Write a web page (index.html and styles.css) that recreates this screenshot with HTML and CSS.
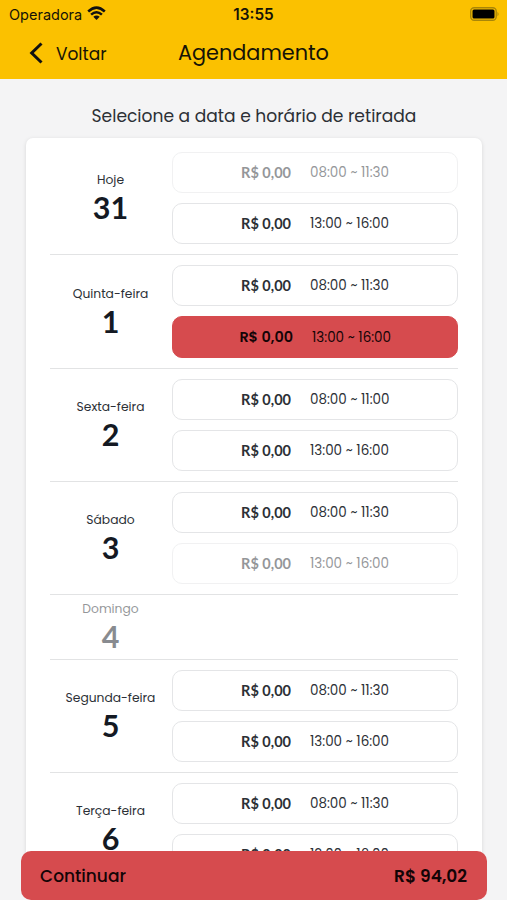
FILE: index.html
```html
<!DOCTYPE html>
<html lang="pt-BR">
<head>
<meta charset="utf-8">
<meta name="viewport" content="width=device-width, initial-scale=1">
<title>Agendamento</title>
<link rel="stylesheet" href="styles.css">
</head>
<body>
<div class="screen">
  <header class="header">
    <div class="status">
      <div class="carrier"><span class="operator">Operadora</span>
        <svg class="wifi" width="19" height="15" viewBox="0 0 19 15"><g fill="none" stroke="#111" stroke-width="2.5"><path d="M1.2 5.5Q9.5-2.3 17.800 5.500"/><path d="M4.100 8.700Q9.500 3.700 14.900 8.700"/></g><path d="M6.300 10.700Q9.500 8.200 12.700 10.700L9.500 14Z" fill="#111"/></svg>
      </div>
      <span class="clock">13:55</span>
      <svg class="battery" width="31" height="14" viewBox="0 0 31 14"><rect x="1.700" y=".7" width="25.500" height="12.600" rx="3.500" fill="none" stroke="#a98608" stroke-width="1.400"/><rect x="3.500" y="2.500" width="22" height="9" rx="1.500"/><path d="M28.500 4.700Q30.700 7 28.500 9.300Z" fill="#a98608"/></svg>
    </div>
    <nav class="nav">
      <div class="back"><svg width="14" height="22" viewBox="0 0 14 22"><path d="M12.500 1.500L2.700 11L12.500 20.500" fill="none" stroke="#111" stroke-width="3"/></svg><span class="back-label">Voltar</span></div>
      <h1 class="title">Agendamento</h1>
    </nav>
  </header>
  <main class="content">
    <p class="subtitle">Selecione a data e horário de retirada</p>
    <div class="card">
      <section class="day"><div class="date"><span class="name">Hoje</span><span class="number">31</span></div>
        <div class="slots"><div class="slot disabled"><b>R$ 0,00</b><span>08:00 ~ 11:30</span></div><div class="slot"><b>R$ 0,00</b><span>13:00 ~ 16:00</span></div></div></section>
      <section class="day"><div class="date"><span class="name">Quinta-feira</span><span class="number">1</span></div>
        <div class="slots"><div class="slot"><b>R$ 0,00</b><span>08:00 ~ 11:30</span></div><div class="slot selected"><b>R$ 0,00</b><span>13:00 ~ 16:00</span></div></div></section>
      <section class="day"><div class="date"><span class="name">Sexta-feira</span><span class="number">2</span></div>
        <div class="slots"><div class="slot"><b>R$ 0,00</b><span>08:00 ~ 11:00</span></div><div class="slot"><b>R$ 0,00</b><span>13:00 ~ 16:00</span></div></div></section>
      <section class="day"><div class="date"><span class="name">Sábado</span><span class="number">3</span></div>
        <div class="slots"><div class="slot"><b>R$ 0,00</b><span>08:00 ~ 11:30</span></div><div class="slot disabled"><b>R$ 0,00</b><span>13:00 ~ 16:00</span></div></div></section>
      <section class="day closed"><div class="date"><span class="name">Domingo</span><span class="number">4</span></div></section>
      <section class="day"><div class="date"><span class="name">Segunda-feira</span><span class="number">5</span></div>
        <div class="slots"><div class="slot"><b>R$ 0,00</b><span>08:00 ~ 11:30</span></div><div class="slot"><b>R$ 0,00</b><span>13:00 ~ 16:00</span></div></div></section>
      <section class="day"><div class="date"><span class="name">Terça-feira</span><span class="number">6</span></div>
        <div class="slots"><div class="slot"><b>R$ 0,00</b><span>08:00 ~ 11:30</span></div><div class="slot"><b>R$ 0,00</b><span>13:00 ~ 16:00</span></div></div></section>
    </div>
  </main>
  <footer class="continue"><span class="action">Continuar</span><span class="total">R$ 94,02</span></footer>
</div>
</body>
</html>
```
FILE: styles.css
```css
* { box-sizing: border-box; }
body { margin: 0; background: #f4f4f5; color: #2c3036; font-family: Poppins, Inter, "Liberation Sans", sans-serif; }
.screen { height: 900px; overflow: hidden; display: flex; flex-direction: column; position: relative; }
.header { height: 79px; flex: none; background: #fbc100; color: #151307; }
.status { height: 28px; display: grid; grid-template-columns: 1fr auto 1fr; align-items: center; padding: 0 7px 0 9px; font-family: Inter, sans-serif; }
.carrier { display: flex; align-items: center; gap: 5px; font-size: 14.5px; }
.wifi { display: block; margin-top: -2px; }
.clock { font-size: 15.3px; font-weight: 600; margin-left: -2px; }
.battery { justify-self: end; margin-top: -1px; }
.nav { display: grid; grid-template-columns: 149px 1fr; height: 49px; align-items: center; padding-left: 29px; }
.back { display: flex; align-items: center; gap: 13px; font-size: 17px; }
.back-label { padding-top: 2px; }
.title { margin: 0; font-size: 20.8px; font-weight: 400; }
.content { flex: none; padding: 23px 25px 0 26px; }
.subtitle { margin: 0; height: 36px; line-height: 28px; font-size: 17.1px; text-align: center; white-space: nowrap; }
.card { background: #fff; border-radius: 7px; box-shadow: 0 1px 4px rgba(0,0,0,.12); padding: 4px 24px 0; }
.day { display: grid; grid-template-columns: 121px 1fr; column-gap: 1px; padding: 10px 0; border-bottom: 1px solid #e2e3e4; }
.date { display: flex; flex-direction: column; align-items: center; justify-content: center; }
.name { font-size: 12.3px; line-height: 20px; white-space: nowrap; }
.number { font: 700 30.5px/34px Lato, sans-serif; color: #141923; padding-bottom: 2px; }
.slots { display: grid; gap: 10px; }
.slot { height: 41px; border: 1px solid #e4e5e7; border-radius: 10px; display: grid; grid-template-columns: 118px 1fr; column-gap: 19px; align-items: center; font-size: 13.5px; white-space: nowrap; }
.slot b { justify-self: end; font: 700 14.5px Lato, sans-serif; }
.slot span { justify-self: start; padding-top: 1px; }
.slot.disabled, .closed .date { opacity: .5; }
.slot.selected { height: 42px; background: #d64b4e; border-color: #d64b4e; color: #140406; grid-template-columns: 120px 1fr; }
.slot.selected b { font: 600 14.4px Poppins, Inter, sans-serif; padding-top: 1px; }
.closed { height: 65px; padding: 0; }
.continue { position: absolute; left: 21px; right: 20px; bottom: 0; height: 49px; border-radius: 10px; background: #d64b4e; color: #130406; display: flex; justify-content: space-between; align-items: center; padding: 0 20px 0 19px; font-size: 17px; font-weight: 500; }
.total { font-weight: 600; }
```
